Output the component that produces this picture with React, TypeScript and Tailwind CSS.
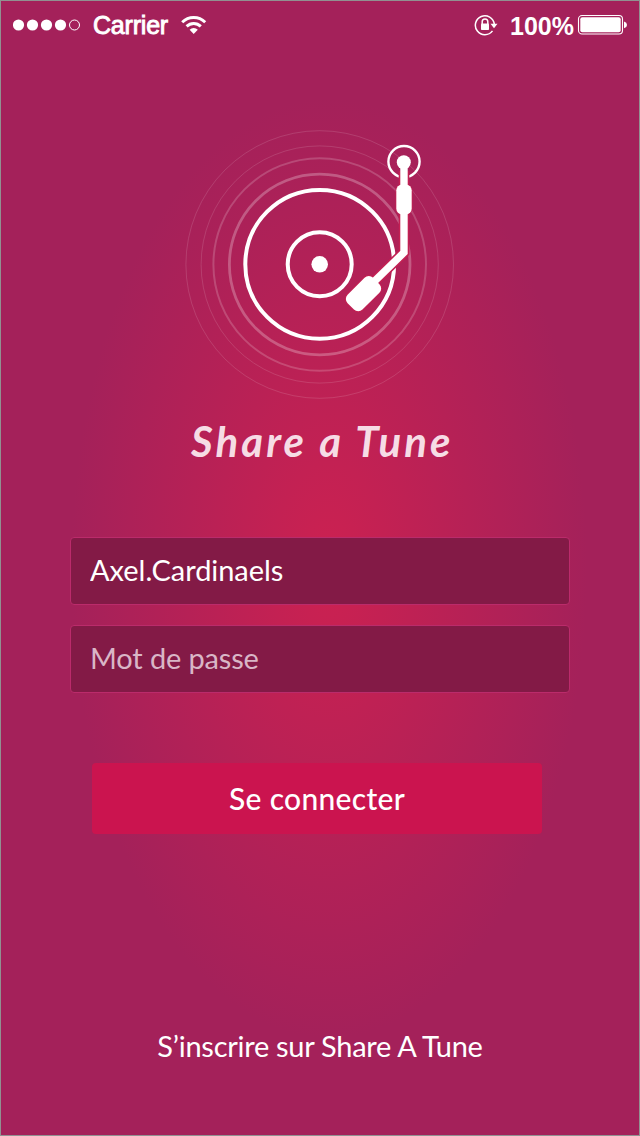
import React from "react";

function StatusBar() {
  return (
    <header className="flex h-[49px] items-center justify-between pr-[11px] pl-3 font-['Liberation_Sans',sans-serif] text-[25px] leading-[49px] text-white">
      <div className="flex items-center">
        <svg width="69" height="14" viewBox="0 0 69 14" fill="white" className="-mt-px">
          <circle cx="5.5" cy="7" r="5.6" />
          <circle cx="19.5" cy="7" r="5.6" />
          <circle cx="33.5" cy="7" r="5.6" />
          <circle cx="47.5" cy="7" r="5.6" />
          <circle cx="61.5" cy="7" r="5" fill="none" stroke="white" />
        </svg>
        <span className="ml-[11px] w-[76px] text-[25px] tracking-[-0.2px] [-webkit-text-stroke:0.9px_white]">Carrier</span>
        <svg className="-mt-[2px] ml-[11px]" width="28" height="22" viewBox="0 0 28 22" fill="none" stroke="white" strokeWidth="2.9">
          <path d="M2.2 8.3a16.3 16.3 0 0 1 23 0M6.6 12.4a10.1 10.1 0 0 1 14.2 0" />
          <path d="M9.6 15.8a5.8 5.8 0 0 1 8.2 0L13.7 20z" fill="white" stroke="none" />
        </svg>
      </div>
      <div className="flex items-center">
        <svg width="25" height="24" viewBox="0 0 25 24" fill="none" stroke="white" strokeWidth="1.5" className="-mt-[2px]">
          <path d="M18.5 17.9a9.5 9.5 0 1 1 1.8-6.8" />
          <path d="M16.5 10.8h7L20 15.3z" fill="white" stroke="none" />
          <path d="M8.2 11V8.8a2.8 2.8 0 0 1 5.6 0V11" />
          <rect x="7" y="10.6" width="8" height="6.4" rx=".8" fill="white" stroke="none" />
        </svg>
        <span className="ml-[11px] w-[67px] pt-px text-[25px] font-bold">100%</span>
        <svg width="51" height="22" viewBox="0 0 51 22" className="-mt-px">
          <rect x="1.5" y="1.5" width="44" height="18.5" rx="3.5" fill="none" stroke="white" strokeWidth="1.1" />
          <rect x="3.3" y="3.3" width="40.4" height="14.9" rx="2" fill="white" />
          <path d="M47 7.5q3 1 3 3.4t-3 3.4z" fill="white" />
        </svg>
      </div>
    </header>
  );
}

function Turntable() {
  return (
    <svg width="300" height="290" viewBox="0 0 300 290" fill="none" stroke="white">
      <circle cx="149.7" cy="149.5" r="133.8" strokeOpacity=".13" />
      <circle cx="149.7" cy="149.5" r="118.6" strokeOpacity=".13" />
      <circle cx="149.7" cy="149.5" r="106.3" strokeOpacity=".18" strokeWidth="2" />
      <circle cx="149.7" cy="149.5" r="90.3" strokeOpacity=".26" strokeWidth="2.8" />
      <circle cx="149.7" cy="149.3" r="74.4" strokeWidth="4" />
      <circle cx="149.7" cy="149.3" r="32" strokeWidth="4" />
      <circle cx="149.7" cy="149.3" r="8.3" fill="white" stroke="none" />
      <circle cx="234" cy="46.6" r="15.6" strokeWidth="2.4" />
      <g stroke="#c32053">
        <path d="M234 56V137.5L196 174.5" strokeWidth="10.6" />
        <rect x="226" y="69.5" width="16" height="30" rx="6" fill="#c32053" />
        <rect x="175" y="167.7" width="37" height="22" rx="6.5" transform="rotate(-45 193.5 178.7)" fill="#c32053" />
      </g>
      <circle cx="233.8" cy="47.3" r="7" fill="white" stroke="none" />
      <path d="M234 48V137.5L196 174.5" strokeWidth="7.4" />
      <g fill="white" stroke="none">
        <rect x="226.3" y="69.5" width="15.4" height="30" rx="5.8" />
        <rect x="175.5" y="168.2" width="36" height="21" rx="6" transform="rotate(-45 193.5 178.7)" />
      </g>
    </svg>
  );
}

export default function App() {
  return (
    <main className="flex h-[1136px] w-[640px] flex-col overflow-hidden border border-[#919191] bg-[#a4215a] bg-[radial-gradient(ellipse_258px_470px_at_328px_567px,#cc2151_0%,#a4215a_100%)] font-[Lato,sans-serif] text-white">
      <StatusBar />
      <div className="mt-[65px] ml-[169px] h-[290px]"><Turntable /></div>
      <h1 className="mt-[8px] ml-[190px] h-[56px] text-[42px] leading-[56px] font-bold whitespace-nowrap italic tracking-[3.05px] text-[#f6dce5]">Share a Tune</h1>
      <form className="mt-[68px] flex flex-col px-[69px]" onSubmit={(e) => e.preventDefault()}>
        <input aria-label="Nom" defaultValue="Axel.Cardinaels" className="h-[68px] w-[500px] rounded-[4px] border border-[#bb2b6b] bg-[#831a46] px-[19px] pb-1 text-[29px] tracking-[-0.05px] outline-none" />
        <input aria-label="Mot de passe" placeholder="Mot de passe" className="mt-5 h-[68px] w-[500px] rounded-[4px] border border-[#bb2b6b] bg-[#831a46] px-[19px] pb-1 text-[29px] tracking-[-0.15px] outline-none placeholder:text-[#d9b6c6] placeholder:opacity-100" />
        <button className="mt-[70px] ml-[22px] h-[71px] w-[450px] rounded-[4px] bg-[#cb144f] pb-px text-[30px] font-medium tracking-[0.3px]">Se connecter</button>
      </form>
      <a className="mt-[188px] block text-center text-[29px] leading-[48px] tracking-[-0.27px]">S’inscrire sur Share A Tune</a>
    </main>
  );
}
